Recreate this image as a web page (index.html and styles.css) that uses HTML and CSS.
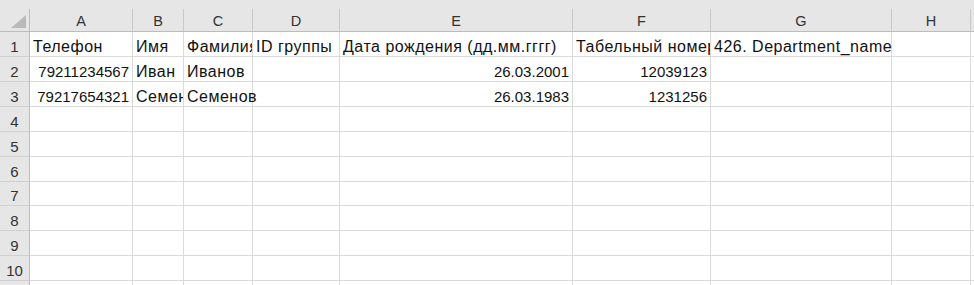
FILE: index.html
```html
<!DOCTYPE html>
<html lang="ru">

<head>
    <meta charset="UTF-8">
    <meta name="viewport" content="width=device-width, initial-scale=1.0">
    <title>Книга1</title>

    <link rel="stylesheet" href="styles.css">
</head>

<body>
    <div class="gap"></div>

    <div class="sheet">
        <!-- заголовки столбцов -->
        <div class="corner"><span class="corner-mark"></span></div>
        <div class="col-head">A</div>
        <div class="col-head">B</div>
        <div class="col-head">C</div>
        <div class="col-head">D</div>
        <div class="col-head">E</div>
        <div class="col-head">F</div>
        <div class="col-head">G</div>
        <div class="col-head">H</div>
        <div class="col-head"></div>

        <!-- строка 1 -->
        <div class="row-head">1</div>
        <div class="cell">Телефон</div>
        <div class="cell">Имя</div>
        <div class="cell">Фамилия</div>
        <div class="cell">ID группы</div>
        <div class="cell">Дата рождения (дд.мм.гггг)</div>
        <div class="cell">Табельный номер</div>
        <div class="cell spill">426. Department_name</div>
        <div class="cell"></div>
        <div class="cell"></div>

        <!-- строка 2 -->
        <div class="row-head">2</div>
        <div class="cell num">79211234567</div>
        <div class="cell">Иван</div>
        <div class="cell">Иванов</div>
        <div class="cell"></div>
        <div class="cell num">26.03.2001</div>
        <div class="cell num">12039123</div>
        <div class="cell"></div>
        <div class="cell"></div>
        <div class="cell"></div>

        <!-- строка 3 -->
        <div class="row-head">3</div>
        <div class="cell num">79217654321</div>
        <div class="cell">Семен</div>
        <div class="cell spill">Семенов</div>
        <div class="cell"></div>
        <div class="cell num">26.03.1983</div>
        <div class="cell num">1231256</div>
        <div class="cell"></div>
        <div class="cell"></div>
        <div class="cell"></div>
    </div>

    <script>
        // пустые строки 4-10 и начало 11-й (без номера, она уходит за край)
        const sheet = document.querySelector('.sheet');
        for (let r = 4; r <= 11; r++) {
            const head = document.createElement('div');
            head.className = 'row-head';
            if (r <= 10) head.innerText = r;
            sheet.appendChild(head);
            for (let c = 0; c < 9; c++) {
                const cell = document.createElement('div');
                cell.className = 'cell';
                sheet.appendChild(cell);
            }
        }
    </script>
</body>

</html>
```

FILE: styles.css
```css
* {
    margin: 0;
    padding: 0;
    box-sizing: border-box;
}

body {
    background-color: #e6e6e6;
    font-family: "Liberation Sans", Arial, sans-serif;
    font-size: 15px;
    color: #111;
    overflow: hidden;
}

/* полоска между строкой формул и листом */
.gap {
    height: 9px;
}

.sheet {
    display: grid;
    grid-template-columns: 30px 103px 51px 69px 87px 233px 138px 181px 79px 1fr;
    grid-template-rows: 23px repeat(6, 25px) 24px 25px 25px 25px 25px;
    background-color: #fff;
}

.corner {
    position: relative;
    background-color: #e6e6e6;
    border-right: 1px solid #bcbcbc;
    border-bottom: 1px solid #bcbcbc;
}

.corner-mark {
    position: absolute;
    right: 3px;
    bottom: 3px;
    width: 0;
    height: 0;
    border-left: 15px solid transparent;
    border-bottom: 13px solid #b9b9b9;
}

.col-head {
    display: flex;
    justify-content: center;
    align-items: flex-end;
    padding-bottom: 2px;
    background-color: #e6e6e6;
    border-right: 1px solid #c8c8c8;
    border-bottom: 1px solid #bcbcbc;
    color: #333;
    font-size: 14.5px;
}

.row-head {
    display: flex;
    justify-content: center;
    align-items: flex-end;
    padding-bottom: 1px;
    background-color: #e6e6e6;
    border-right: 1px solid #bcbcbc;
    border-bottom: 1px solid #d0d0d0;
    color: #333;
}

.cell {
    display: flex;
    align-items: flex-end;
    padding: 0 3px 0 3px;
    border-right: 1px solid #dadada;
    border-bottom: 1px solid #dadada;
    white-space: nowrap;
    overflow: hidden;
    font-size: 16px;
    letter-spacing: 0.5px;
}

/* текст заходит на соседнюю пустую ячейку */
.spill {
    overflow: visible;
}

.num {
    justify-content: flex-end;
    padding-bottom: 1px;
    font-size: 15px;
    letter-spacing: 0;
}
```
